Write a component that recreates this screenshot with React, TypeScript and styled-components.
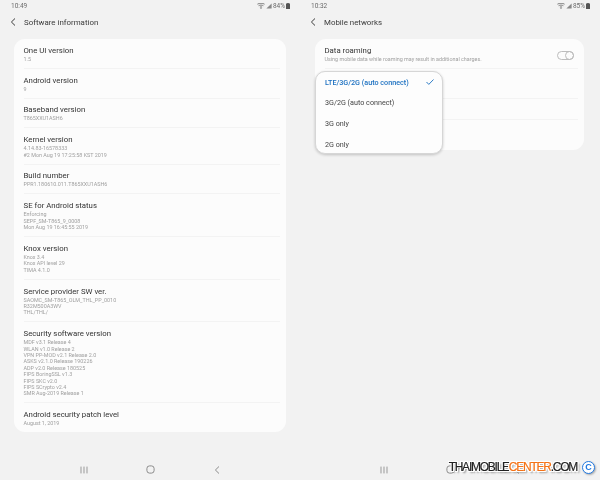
import React from "react";
import styled, { createGlobalStyle } from "styled-components";

const Global = createGlobalStyle`
  html, body { margin: 0; padding: 0; background: #f2f2f2; }
  body { width: 600px; height: 480px; overflow: hidden; font-family: Roboto, "Liberation Sans", sans-serif; }
`;

const Page = styled.div`
  position: relative;
  width: 600px;
  height: 480px;
  display: grid;
  grid-template-columns: 300px 300px;
`;

const Screen = styled.section`
  position: relative;
  height: 480px;
  display: flex;
  flex-direction: column;
  filter: blur(0.25px);
`;

const StatusBar = styled.div`
  height: 11px;
  display: flex;
  align-items: center;
  justify-content: space-between;
  font-size: 6.5px;
  color: #6a6a6a;
  padding: 0 10px 0 11px;
`;

const StatusIcons = styled.div`
  display: flex;
  align-items: center;
  gap: 1px;
`;

const Header = styled.header`
  height: 22px;
  margin-bottom: 6px;
  display: flex;
  align-items: center;
  gap: 7px;
  font-size: 7.9px;
  color: #3a3a3a;
  padding-left: 9px;
`;

const Card = styled.div<{ $left: number; $right: number }>`
  background: #fcfcfc;
  border-radius: 11px;
  margin: 0 ${(p) => p.$right}px 0 ${(p) => p.$left}px;
  padding: 0 6px 0 9.5px;
  display: flex;
  flex-direction: column;
`;

const Row = styled.div<{ $height?: number }>`
  padding: 5.9px 0 5.5px;
  height: ${(p) => (p.$height ? `${p.$height}px` : "auto")};
  box-sizing: ${(p) => (p.$height ? "border-box" : "content-box")};
  border-bottom: 1px solid #f3f3f3;
  &:last-child { border-bottom: none; }
`;

const RowTop = styled.div`
  display: flex;
  align-items: center;
  justify-content: space-between;
  padding-right: 4px;
`;

const Title = styled.div`
  font-size: 7.8px;
  line-height: 11px;
  color: #333;
`;

const Sub = styled.div`
  font-size: 5.4px;
  line-height: 6.4px;
  color: #a0a0a0;
  white-space: pre-line;
`;

const Toggle = styled.span`
  width: 17px;
  height: 9px;
  box-sizing: border-box;
  border: 0.8px solid #bdbdbd;
  border-radius: 5px;
  display: flex;
  justify-content: flex-end;
  margin: 4px 0 -6px;
  &::after {
    content: "";
    display: block;
    flex: none;
    width: 9px;
    height: 9px;
    box-sizing: border-box;
    border: 0.8px solid #bdbdbd;
    border-radius: 50%;
    margin: -0.8px -0.8px -0.8px 0;
  }
`;

const Spacer = styled.div`
  flex: 1;
`;

const NavBar = styled.nav`
  height: 21px;
  padding-left: 1px;
  display: grid;
  grid-template-columns: repeat(3, 66.5px);
  justify-content: center;
  justify-items: center;
  align-items: center;
`;

const Popup = styled.div`
  position: absolute;
  left: 15px;
  top: 71px;
  width: 128px;
  height: 83px;
  box-sizing: border-box;
  background: #fdfdfd;
  border: 1px solid #d6d6d6;
  border-radius: 10px;
  box-shadow: 0 1px 3px rgba(0, 0, 0, 0.2);
  padding: 0 8px 0 9px;
  display: flex;
  flex-direction: column;
`;

const PopupItem = styled.div<{ $active?: boolean }>`
  flex: none;
  height: 20.6px;
  display: flex;
  align-items: center;
  justify-content: space-between;
  font-size: 7.2px;
  font-weight: ${(p) => (p.$active ? 500 : 400)};
  color: ${(p) => (p.$active ? "#1a6fc0" : "#454545")};
`;

const Watermark = styled.div`
  position: absolute;
  right: 5px;
  bottom: 6px;
  display: flex;
  align-items: center;
  gap: 5px;
`;

const MarkText = styled.span`
  font-family: "Liberation Sans", Arial, sans-serif;
  font-size: 12px;
  line-height: 14px;
  letter-spacing: -1.25px;
  color: #222;
  -webkit-text-stroke: 0.2px currentColor;
  text-shadow:
    1px 0 0 #fff, -1px 0 0 #fff, 0 1px 0 #fff, 0 -1px 0 #fff,
    1px 1px 0 #fff, -1px -1px 0 #fff, 1px -1px 0 #fff, -1px 1px 0 #fff,
    2px 2px 2px rgba(0, 0, 0, 0.45);
`;

const MarkAccent = styled.span`
  color: #f47216;
`;

const MarkC = styled.span`
  width: 13px;
  height: 13px;
  box-sizing: border-box;
  display: flex;
  align-items: center;
  justify-content: center;
  border-radius: 50%;
  border: 1.4px solid #1f78e0;
  color: #1f78e0;
  background: #fff;
  font: bold 9px "Liberation Sans", sans-serif;
  box-shadow: 1px 1px 2px rgba(0, 0, 0, 0.3);
`;

const Back = ({ color = "#3a3a3a", w = 1 }: { color?: string; w?: number }) => (
  <svg width="8" height="8" viewBox="0 0 8 8" fill="none">
    <path d="M6 .5 L2.4 4 L6 7.5" stroke={color} strokeWidth={w} />
  </svg>
);

const Recents = () => (
  <svg width="8" height="8" viewBox="0 0 8 8" fill="none" stroke="#999" strokeWidth="1">
    <path d="M1 .6V7.4M4 .6V7.4M7 .6V7.4" />
  </svg>
);

const Home = () => (
  <svg width="9" height="9" viewBox="0 0 9 9" fill="none" stroke="#808080" strokeWidth="0.9">
    <rect x="0.9" y="0.9" width="7.2" height="7.2" rx="2.6" />
  </svg>
);

const Wifi = () => (
  <svg width="8" height="6" viewBox="0 0 8 6" fill="none" stroke="#666" strokeWidth="0.8">
    <path d="M.4 1.2C2.6-.1 5.4-.1 7.6 1.2M1.6 2.7C3 1.9 5 1.9 6.4 2.7M2.9 4.1C3.6 3.7 4.4 3.7 5.1 4.1" />
    <circle cx="4" cy="5.2" r=".6" fill="#666" stroke="none" />
  </svg>
);

const Signal = () => (
  <svg width="6" height="6" viewBox="0 0 6 6" fill="#888">
    <path d="M5.6 .4V5.6H.4Z" />
  </svg>
);

const Battery = () => (
  <svg width="4" height="6" viewBox="0 0 4 6" fill="#555">
    <path d="M1.2 0H2.8V.6H4V6H0V.6H1.2Z" />
  </svg>
);

const Status = ({ time, pct }: { time: string; pct: string }) => (
  <StatusBar>
    <span>{time}</span>
    <StatusIcons>
      <Wifi />
      <Signal />
      <span>{pct}</span>
      <Battery />
    </StatusIcons>
  </StatusBar>
);

const info: [string, string][] = [
  ["One UI version", "1.5"],
  ["Android version", "9"],
  ["Baseband version", "T865XXU1ASH6"],
  ["Kernel version", "4.14.83-16578333\n#2 Mon Aug 19 17:25:58 KST 2019"],
  ["Build number", "PPR1.180610.011.T865XXU1ASH6"],
  ["SE for Android status", "Enforcing\nSEPF_SM-T865_9_0008\nMon Aug 19 16:45:55 2019"],
  ["Knox version", "Knox 3.4\nKnox API level 29\nTIMA 4.1.0"],
  ["Service provider SW ver.", "SAOMC_SM-T865_OLM_THL_PP_0010\nR32M500A3WV\nTHL/THL/"],
  [
    "Security software version",
    "MDF v3.1 Release 4\nWLAN v1.0 Release 2\nVPN PP-MOD v2.1 Release 2.0\nASKS v2.1.0 Release 190226\nADP v2.0 Release 180525\nFIPS BoringSSL v1.3\nFIPS SKC v2.0\nFIPS SCrypto v2.4\nSMR Aug-2019 Release 1",
  ],
  ["Android security patch level", "August 1, 2019"],
];

const options = ["LTE/3G/2G (auto connect)", "3G/2G (auto connect)", "3G only", "2G only"];

export default function App() {
  return (
    <Page>
      <Global />
      <Screen>
        <Status time="10:49" pct="84%" />
        <Header>
          <Back />
          <span>Software information</span>
        </Header>
        <Card $left={14} $right={14}>
          {info.map(([t, s]) => (
            <Row key={t}>
              <Title>{t}</Title>
              <Sub>{s}</Sub>
            </Row>
          ))}
        </Card>
        <Spacer />
        <NavBar>
          <Recents />
          <Home />
          <Back color="#808080" w={0.9} />
        </NavBar>
      </Screen>
      <Screen>
        <Status time="10:32" pct="85%" />
        <Header>
          <Back />
          <span>Mobile networks</span>
        </Header>
        <Card $left={15} $right={16}>
          <Row>
            <RowTop>
              <Title>Data roaming</Title>
              <Toggle />
            </RowTop>
            <Sub>Using mobile data while roaming may result in additional charges.</Sub>
          </Row>
          <Row $height={30} />
          <Row $height={21} />
          <Row $height={30} />
        </Card>
        <Popup>
          {options.map((o, i) => (
            <PopupItem key={o} $active={i === 0}>
              <span>{o}</span>
              {i === 0 && (
                <svg width="8" height="6" viewBox="0 0 8 6" fill="none" stroke="#1a6fc0" strokeWidth="0.9">
                  <path d="M.5 3L2.8 5.4L7.5 .5" />
                </svg>
              )}
            </PopupItem>
          ))}
        </Popup>
        <Spacer />
        <NavBar>
          <Recents />
          <Home />
          <Back color="#808080" w={0.9} />
        </NavBar>
        <Watermark>
          <MarkText>
            THAIMOBILE<MarkAccent>CENTER</MarkAccent>.COM
          </MarkText>
          <MarkC>C</MarkC>
        </Watermark>
      </Screen>
    </Page>
  );
}
